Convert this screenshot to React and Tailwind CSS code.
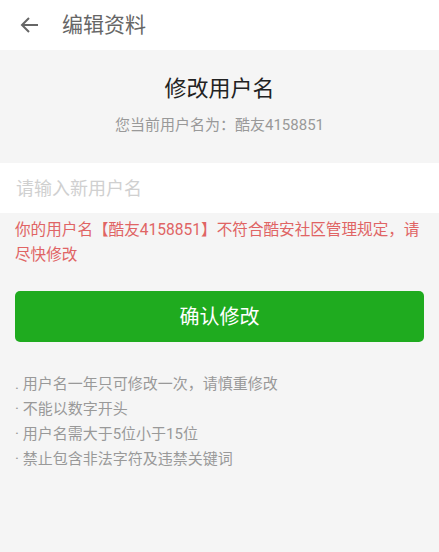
const font = { fontFamily: 'Roboto, "Noto Sans CJK SC", sans-serif' };

const rules = [
  ". 用户名一年只可修改一次，请慎重修改",
  "· 不能以数字开头",
  "· 用户名需大于5位小于15位",
  "· 禁止包含非法字符及违禁关键词",
];

function App() {
  return (
    <div className="w-[439px] h-[552px] bg-[#f5f5f5] flex flex-col" style={font}>
      <div className="h-[50px] bg-white flex items-center shrink-0">
        <svg width="24" height="24" viewBox="0 0 24 24" className="ml-[18px]" fill="none" stroke="#666" strokeWidth="2">
          <path d="M20 12H5" />
          <path d="M11 5l-7 7 7 7" />
        </svg>
        <span className="ml-[20px] text-[21px] text-[#666] leading-none">编辑资料</span>
      </div>

      <div className="flex flex-col items-center pt-[25px]">
        <h1 className="text-[22px] text-[#222] leading-[28px]">修改用户名</h1>
        <p className="mt-[12px] text-[15px] text-[#999] leading-[20px]">您当前用户名为：酷友4158851</p>
      </div>

      <div className="mt-[28px] h-[50px] bg-white flex items-center px-[16px]">
        <input
          type="text"
          placeholder="请输入新用户名"
          className="w-full outline-none text-[18px] placeholder:text-[#d0d0d0] bg-transparent"
        />
      </div>

      <p className="mt-[5px] px-[15px] text-[15.6px] leading-[25px] text-[#e06464]">
        你的用户名【酷友4158851】不符合酷安社区管理规定，请尽快修改
      </p>

      <div className="px-[15px] mt-[23px]">
        <button className="w-full h-[51px] rounded-[5px] bg-[#1fab1f] text-white text-[20px]">确认修改</button>
      </div>

      <ul className="mt-[30px] px-[15px] text-[15px] leading-[25px] text-[#999]">
        {rules.map((r) => (
          <li key={r}>{r}</li>
        ))}
      </ul>
    </div>
  );
}

export default App;
